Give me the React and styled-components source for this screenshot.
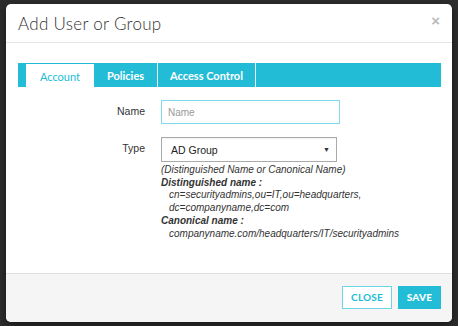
import React from "react";
import styled, { createGlobalStyle } from "styled-components";

const Global = createGlobalStyle`
  html, body { margin: 0; padding: 0; background: #2d2d2d; }
  * { box-sizing: border-box; }
`;

const Page = styled.div`
  width: 458px;
  height: 326px;
  padding: 4px 6px 4px 6px;
  background: #2d2d2d;
`;

const Modal = styled.div`
  width: 446px;
  height: 318px;
  background: #fff;
  border-radius: 5px;
  overflow: hidden;
  display: flex;
  flex-direction: column;
  box-shadow: 0 3px 9px rgba(0, 0, 0, 0.5);
`;

const Header = styled.div`
  height: 39px;
  padding: 0 12px;
  display: flex;
  align-items: center;
  justify-content: space-between;
  border-bottom: 1px solid #e5e5e5;
`;

const Title = styled.h4`
  margin: 0;
  font-family: "Lato", "Open Sans", sans-serif;
  font-weight: 300;
  font-size: 17px;
  color: #333;
  letter-spacing: 0.3px;
`;

const Close = styled.span`
  font-family: "Liberation Sans", Arial, sans-serif;
  font-size: 15px;
  font-weight: bold;
  color: #bbb;
  margin-top: -5px;
  margin-right: 0;
`;

const Body = styled.div`
  flex: 1;
  padding: 20px 11px 0 12px;
`;

const TabBar = styled.div`
  height: 24px;
  background: #22bcd6;
  padding-left: 8px;
  display: flex;
`;

const Tab = styled.div`
  width: ${(p) => p.w}px;
  height: 24px;
  margin-top: ${(p) => (p.active ? 1 : 0)}px;
  background: ${(p) => (p.active ? "#fff" : "transparent")};
  border-right: ${(p) => (p.active ? "none" : "1px solid #e6f7fa")};
  display: flex;
  align-items: center;
  justify-content: center;
  font-family: "Lato", "Open Sans", sans-serif;
  font-size: 11px;
  font-weight: ${(p) => (p.active ? 400 : 700)};
  color: ${(p) => (p.active ? "#22bcd6" : "#fff")};
`;

const Form = styled.div`
  display: grid;
  grid-template-columns: 127px auto;
  column-gap: 16px;
  row-gap: 13px;
  padding-top: 13px;
  align-items: start;
`;

const Label = styled.label`
  text-align: right;
  font-family: "Liberation Sans", Arial, sans-serif;
  font-size: 10.5px;
  color: #333;
  padding-top: ${(p) => p.pt}px;
`;

const Input = styled.input`
  width: 179px;
  height: 24px;
  border: 1px solid #7fdbe8;
  padding: 0 6px;
  font-family: "Liberation Sans", Arial, sans-serif;
  font-size: 10px;
  color: #333;
  outline: none;
  &::placeholder { color: #999; }
`;

const SelectBox = styled.div`
  width: 176px;
  height: 25px;
  border: 1px solid #aaa;
  display: flex;
  align-items: center;
  justify-content: space-between;
  padding: 0 6px 0 9px;
  font-family: "Liberation Sans", Arial, sans-serif;
  font-size: 10.5px;
  color: #222;
  box-shadow: inset 0 1px 1px rgba(0, 0, 0, 0.05);
`;

const Arrow = styled.span`
  font-size: 7px;
  color: #333;
`;

const Help = styled.div`
  margin-top: 2px;
  font-family: "Liberation Sans", Arial, sans-serif;
  font-style: italic;
  font-size: 10px;
  line-height: 12.7px;
  color: #333;
  white-space: nowrap;
`;

const HelpLine = styled.div`
  font-weight: ${(p) => (p.bold ? 700 : 400)};
  padding-left: ${(p) => (p.indent ? 8 : 0)}px;
`;

const Footer = styled.div`
  height: 49px;
  background: #f5f5f5;
  border-top: 1px solid #e0e0e0;
  display: flex;
  align-items: center;
  justify-content: flex-end;
  gap: 6px;
  padding: 0 11px 2px 0;
`;

const Button = styled.button`
  height: 23px;
  padding: 0;
  border: 1px solid ${(p) => (p.primary ? "#22bcd6" : "#6fd5e6")};
  background: ${(p) => (p.primary ? "#22bcd6" : "#fff")};
  color: ${(p) => (p.primary ? "#fff" : "#22bcd6")};
  font-family: "Lato", "Open Sans", sans-serif;
  font-weight: ${(p) => (p.primary ? 900 : 700)};
  font-size: 10px;
  letter-spacing: 0.2px;
  width: ${(p) => p.w}px;
`;

export default function App() {
  return (
    <Page>
      <Global />
      <Modal>
        <Header>
          <Title>Add User or Group</Title>
          <Close>×</Close>
        </Header>
        <Body>
          <TabBar>
            <Tab active w={68}>Account</Tab>
            <Tab w={64}>Policies</Tab>
            <Tab w={98}>Access Control</Tab>
          </TabBar>
          <Form>
            <Label pt={5}>Name</Label>
            <Input placeholder="Name" />
            <Label pt={5}>Type</Label>
            <div>
              <SelectBox>
                <span>AD Group</span>
                <Arrow>▼</Arrow>
              </SelectBox>
              <Help>
                <HelpLine>(Distinguished Name or Canonical Name)</HelpLine>
                <HelpLine bold>Distinguished name :</HelpLine>
                <HelpLine indent>cn=securityadmins,ou=IT,ou=headquarters,</HelpLine>
                <HelpLine indent>dc=companyname,dc=com</HelpLine>
                <HelpLine bold>Canonical name :</HelpLine>
                <HelpLine indent>companyname.com/headquarters/IT/securityadmins</HelpLine>
              </Help>
            </div>
          </Form>
        </Body>
        <Footer>
          <Button w={50}>CLOSE</Button>
          <Button primary w={43}>SAVE</Button>
        </Footer>
      </Modal>
    </Page>
  );
}
